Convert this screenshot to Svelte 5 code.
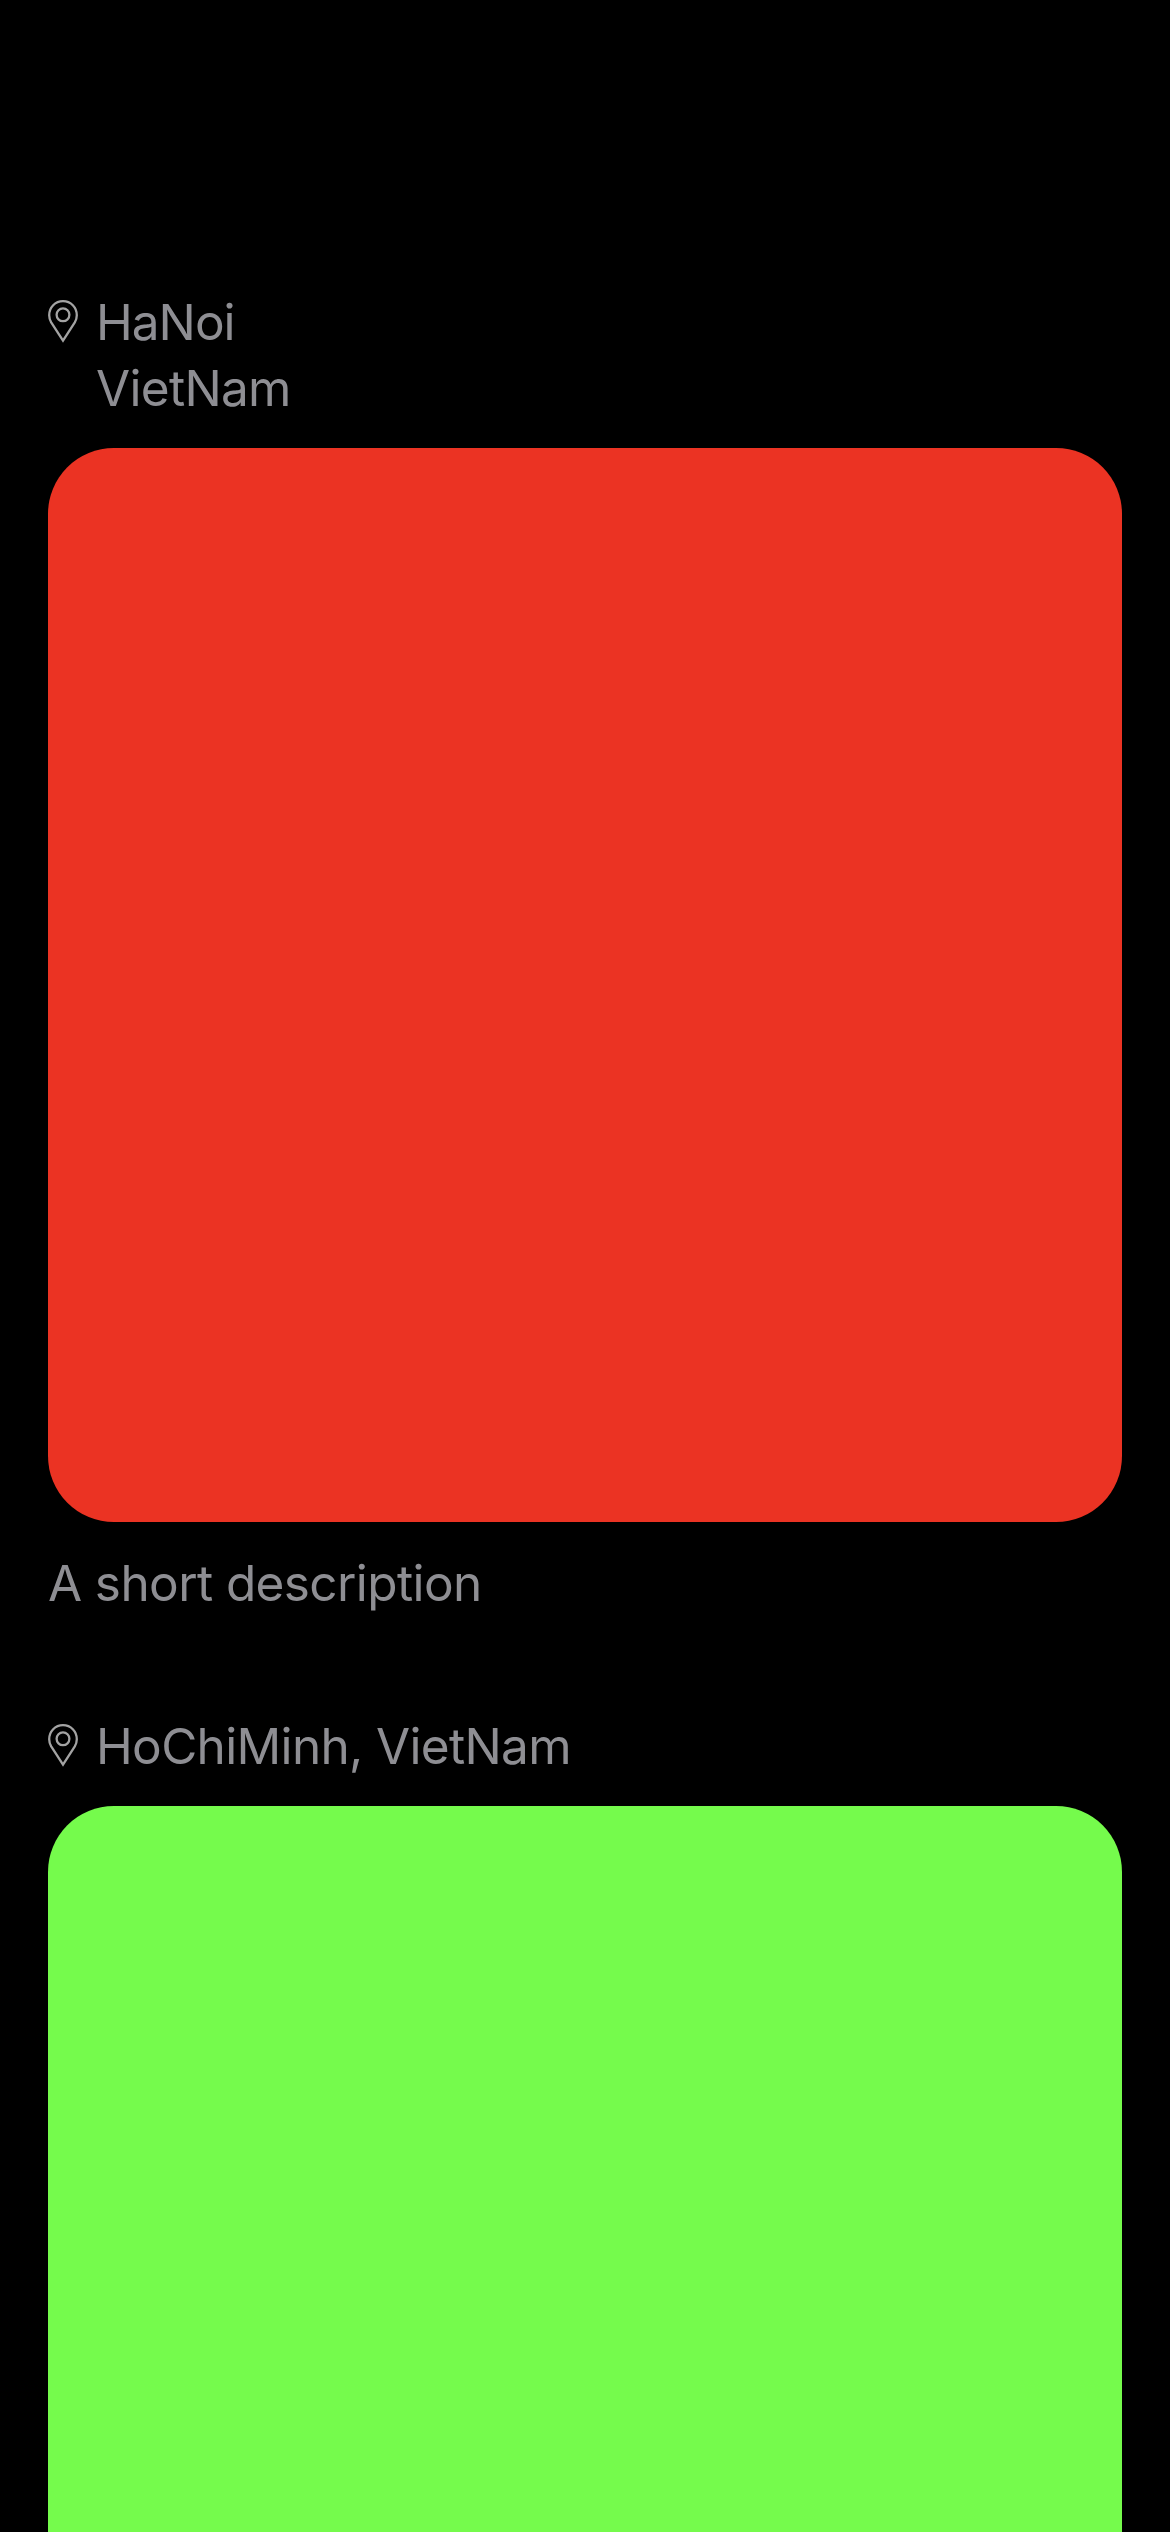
<script>
  const posts = [
    { city: 'HaNoi', country: 'VietNam', stacked: true, tone: 'red', description: 'A short description' },
    { city: 'HoChiMinh', country: 'VietNam', stacked: false, tone: 'green', description: '' }
  ];
</script>

<main>
  {#each posts as post}
    <article>
      <header>
        <svg class="pin" width="30" height="44" viewBox="0 0 30 44" fill="none" aria-hidden="true">
          <path d="M15 40.6 L3.2 22.4 C1.9 20.1 1.2 17.7 1.2 15.2 C1.2 7.3 7.2 1.2 15 1.2 C22.8 1.2 28.8 7.3 28.8 15.2 C28.8 17.7 28.1 20.1 26.8 22.4 Z" />
          <circle cx="15" cy="14.8" r="6.4" />
        </svg>
        {#if post.stacked}
          <div class="place"><div class="city">{post.city}</div><div class="country">{post.country}</div></div>
        {:else}
          <div class="place single">{post.city}, {post.country}</div>
        {/if}
      </header>
      <div class="photo {post.tone}"></div>
      {#if post.description}
        <p>{post.description}</p>
      {/if}
    </article>
  {/each}
</main>

<style>
  :global(body) {
    background: #000;
    overflow: hidden;
  }
  main {
    box-sizing: border-box;
    height: 2532px;
    overflow: hidden;
    padding: 289px 48px 0;
    display: flex;
    flex-direction: column;
    gap: 97px;
    background: #000;
    color: #8e8e93;
    font: 400 49.5px/66px Inter, sans-serif;
  }
  article {
    flex: none;
  }
  header {
    display: flex;
    align-items: flex-start;
    gap: 18px;
    margin-bottom: 27px;
  }
  .pin {
    flex: none;
    margin-top: 11px;
    stroke: #a3a3a3;
    stroke-width: 2.3;
  }
  .place {
    white-space: nowrap;
  }
  .city {
    letter-spacing: -1px;
  }
  .country {
    letter-spacing: -0.7px;
  }
  .single {
    letter-spacing: -0.67px;
  }
  .photo {
    height: 1074px;
    border-radius: 66px;
  }
  .red {
    background: #eb3323;
  }
  .green {
    background: #75fb4c;
  }
  p {
    margin: 28px 0 0;
    letter-spacing: -0.6px;
  }
</style>
